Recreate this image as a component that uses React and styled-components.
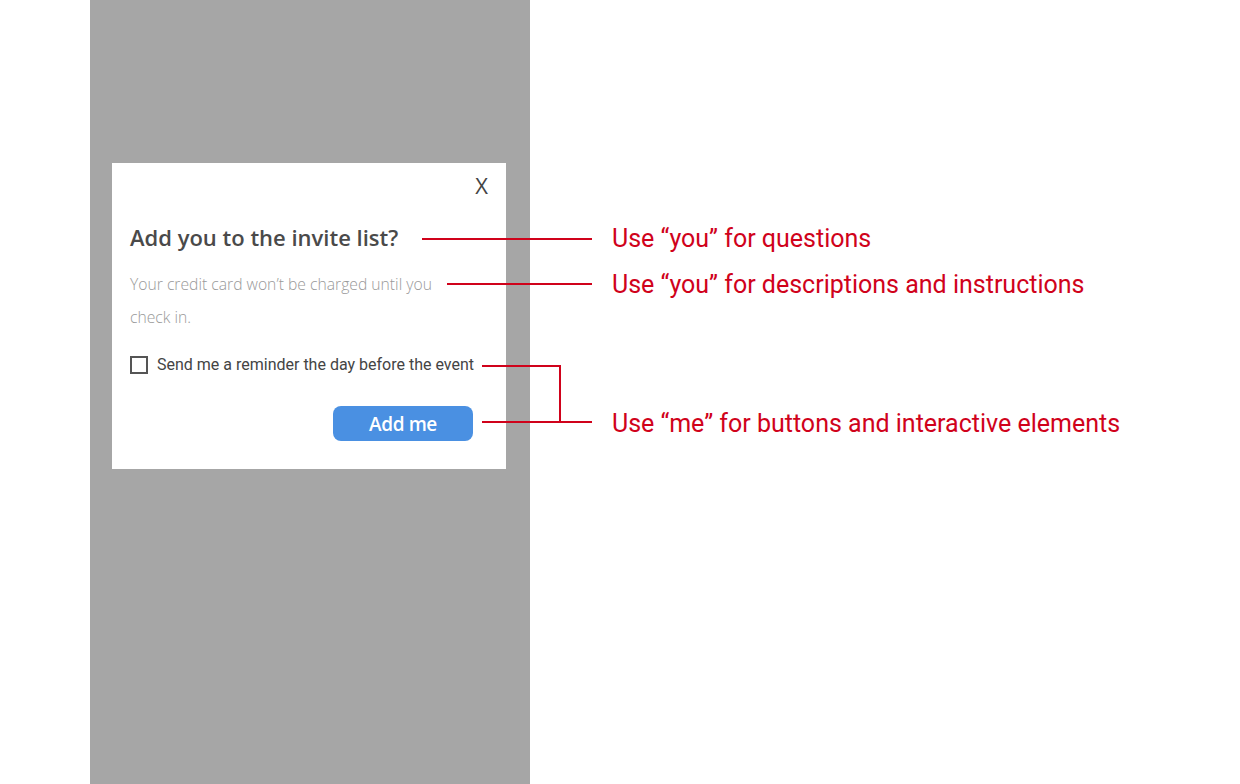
import React from 'react'
import styled, { createGlobalStyle } from 'styled-components';

const GlobalStyle = createGlobalStyle`
    html, body {
        margin: 0;
        padding: 0;
        background: #fff;
    }
`;

const Page = styled.div`
    position: relative;
    width: 1240px;
    height: 784px;
    display: flex;
    overflow: hidden;
`;

const Panel = styled.div`
    width: 440px;
    margin-left: 90px;
    background: #a6a6a6;
    padding: 163px 0 0 22px;
    box-sizing: border-box;
`;

const Dialog = styled.div`
    width: 394px;
    height: 306px;
    background: #fff;
    box-sizing: border-box;
    padding: 9px 18px 0 18px;
    display: flex;
    flex-direction: column;
`;

const CloseRow = styled.div`
    display: flex;
    justify-content: flex-end;
`;

const Close = styled.span`
    font-family: "Open Sans", sans-serif;
    font-weight: 400;
    font-size: 22px;
    line-height: 26px;
    color: #444;
`;

const Title = styled.h2`
    margin: 23px 0 0 0;
    font-family: "Open Sans", sans-serif;
    font-weight: 600;
    font-size: 22px;
    line-height: 32px;
    color: #4a4a4a;
`;

const Desc = styled.p`
    margin: 15px 0 0 0;
    width: 310px;
    font-family: "Open Sans", sans-serif;
    font-weight: 300;
    font-size: 15.7px;
    line-height: 33px;
    color: #999;
`;

const CheckRow = styled.label`
    display: flex;
    align-items: center;
    gap: 9px;
    margin-top: 21px;
    font-family: Roboto, sans-serif;
    font-size: 16px;
    line-height: 20px;
    color: #444;
`;

const Box = styled.span`
    width: 18px;
    height: 18px;
    box-sizing: border-box;
    border: 2px solid #555;
`;

const Actions = styled.div`
    display: flex;
    justify-content: flex-end;
    margin-top: 31px;
    padding-right: 15px;
`;

const Button = styled.button`
    width: 140px;
    height: 35px;
    border: none;
    border-radius: 8px;
    background: #4a90e2;
    color: #fff;
    font-family: "Open Sans", sans-serif;
    font-weight: 600;
    font-size: 19px;
    letter-spacing: -0.4px;
    padding: 0;
`;

const Notes = styled.div`
    margin-left: 82px;
    padding-top: 224px;
    display: flex;
    flex-direction: column;
`;

const Note = styled.div`
    font-family: Roboto, sans-serif;
    font-size: 25px;
    line-height: 30px;
    color: #d0021b;
    margin-top: ${p => p.gap || 0}px;
`;

const Lines = styled.svg`
    position: absolute;
    left: 0;
    top: 0;
    pointer-events: none;
`;

const App = () => {
    return (
        <Page>
            <GlobalStyle />
            <Panel>
                <Dialog>
                    <CloseRow>
                        <Close>X</Close>
                    </CloseRow>
                    <Title>Add you to the invite list?</Title>
                    <Desc>Your credit card won’t be charged until you check in.</Desc>
                    <CheckRow>
                        <Box />
                        Send me a reminder the day before the event
                    </CheckRow>
                    <Actions>
                        <Button>Add me</Button>
                    </Actions>
                </Dialog>
            </Panel>
            <Notes>
                <Note>Use “you” for questions</Note>
                <Note gap={16}>Use “you” for descriptions and instructions</Note>
                <Note gap={109}>Use “me” for buttons and interactive elements</Note>
            </Notes>
            <Lines width="1240" height="784">
                <g stroke="#d0021b" strokeWidth="2" fill="none">
                    <line x1="422" y1="239" x2="592" y2="239" />
                    <line x1="447" y1="284" x2="592" y2="284" />
                    <polyline points="482,366 560,366 560,422" />
                    <line x1="482" y1="422" x2="592" y2="422" />
                </g>
            </Lines>
        </Page>
    )
}

export default App
